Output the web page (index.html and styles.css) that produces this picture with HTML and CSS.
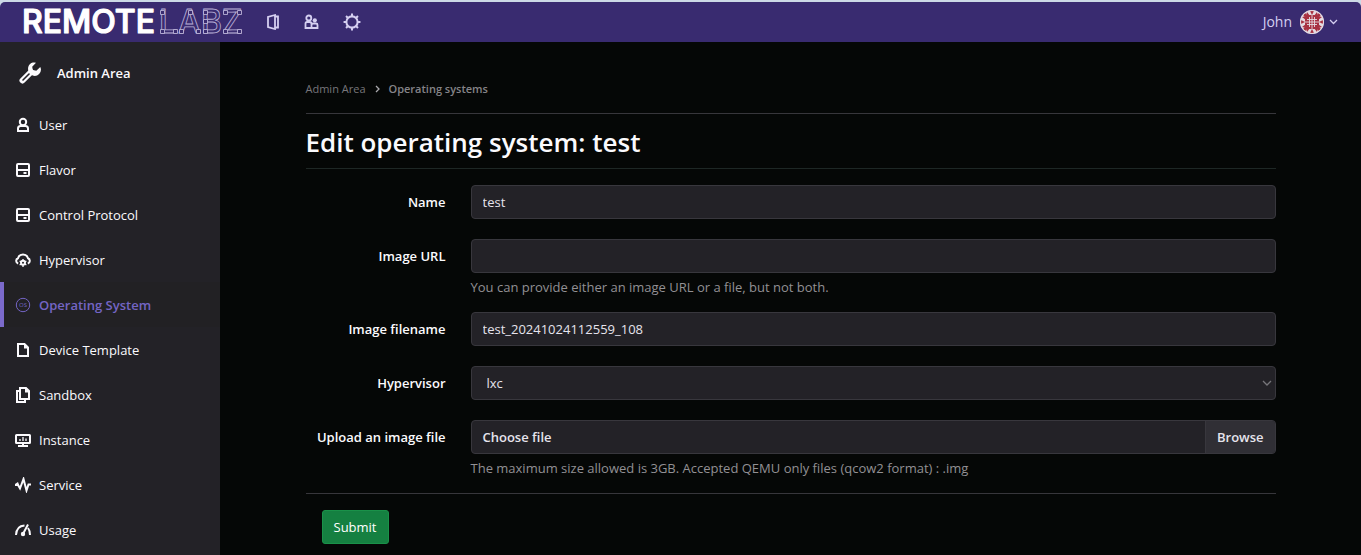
FILE: index.html
```html
<!DOCTYPE html>
<html lang="en">
<head>
<meta charset="utf-8">
<title>Edit operating system - RemoteLabz</title>
<link rel="stylesheet" href="styles.css">
</head>
<body>
<header class="navbar">
  <a class="brand" href="#" aria-label="RemoteLabz">
    <svg width="224" height="40" viewBox="0 0 224 40">
      <text class="brand-solid" x="0" y="31">REMOTE</text>
      <text class="brand-outline" x="137 156 179 200" y="31">LABZ</text>
      <g class="brand-nodes">
        <path d="M138.500 8.500h4v4h-4zM138.500 27.500h4v4h-4zM151.500 27.500h4v4h-4zM157.500 27.500h4v4h-4zM166.500 8.500h4v4h-4zM174.500 27.500h4v4h-4zM181.500 8.500h4v4h-4zM181.500 17.500h4v4h-4zM181.500 27.500h4v4h-4zM201.500 8.500h4v4h-4zM215.500 8.500h4v4h-4zM201.500 27.500h4v4h-4zM215.500 27.500h4v4h-4z"/>
      </g>
    </svg>
  </a>
  <nav class="nav-links" aria-label="Main">
    <a href="#" aria-label="Labs"><svg width="16" height="16" viewBox="0 0 16 16"><path class="line" d="M10 1 3 3v10l7 2zM10 2.500h3v11h-3"/></svg></a>
    <a href="#" aria-label="Groups"><svg width="16" height="16" viewBox="0 0 16 16"><path class="line" d="M1.500 14V9.500Q1.500 8 3 8h2.500Q7.500 8 7.500 10v4zM7.500 14V11q0-1.500 1.500-1.500h3q1.500 0 1.500 1.500v3z"/><circle class="line" cx="4.800" cy="4" r="2.500"/><circle class="shape" cx="10.800" cy="6.300" r="2.100"/></svg></a>
    <a href="#" aria-label="Administration"><svg width="18" height="18" viewBox="0 0 16 16"><circle class="line" cx="8" cy="8" r="5"/><path class="line" d="M8 .5v2.500M8 13v2.500M.5 8h2.500M13 8h2.500M2.700 2.700l1.700 1.700M11.600 11.600l1.700 1.700M13.300 2.700l-1.700 1.700M4.400 11.600l-1.700 1.700"/></svg></a>
  </nav>
  <button class="account" type="button">
    <span>John</span>
    <svg width="24" height="24" viewBox="0 0 24 24">
      <circle cx="12" cy="12" r="12" fill="#e4dbe2"/>
      <g fill="#a83242">
        <path d="M7 2l3 4H6zM17 2l-3 4h4zM2 7l4 3V6zM2 17l4-3v4zM22 7l-4 3V6zM22 17l-4-3v4zM7 22l3-4H6zM17 22l-3-4h4z"/>
        <path d="M10 1h4l-2 4zM10 23h4l-2-4zM1 10v4l4-2zM23 10v4l-4-2z"/>
        <path d="M3 5l3-2 1 3-2 1zM21 5l-3-2-1 3 2 1zM3 19l3 2 1-3-2-1zM21 19l-3 2-1-3 2-1z"/>
        <rect x="5" y="5" width="14" height="14" rx="4"/>
      </g>
      <path d="M9.500 7v10M12 5v14M14.500 7v10M7 9.500h10M5 12h14M7 14.500h10" stroke="#e4dbe2" stroke-width=".9"/>
      <circle cx="12" cy="12" r="11.500" fill="none" stroke="#e4dbe2"/>
    </svg>
    <svg width="9" height="6" viewBox="0 0 9 6"><path d="M1 1l3.500 3.500L8 1" fill="none" stroke="currentColor" stroke-width="1.300"/></svg>
  </button>
</header>
<div class="layout">
  <aside class="sidebar">
    <a class="sidebar-title" href="#">
      <svg width="22" height="22" viewBox="0 0 22 22"><path d="M3.500 18.500 12 10" fill="none" stroke="currentColor" stroke-width="6" stroke-linecap="round"/><path class="shape" d="M17 .7A6.200 6.200 0 0 0 9.200 8l1 4.300 3 1A6.200 6.200 0 0 0 21.300 5l-4 3.700-3.500-.7-.6-3.300z"/><path d="M4 18l6-6" fill="none" stroke="#232227" stroke-width="1.600" stroke-linecap="round"/></svg>
      <span>Admin Area</span>
    </a>
    <ul class="menu">
      <li><a href="#"><svg width="16" height="16" viewBox="0 0 16 16"><path class="line" d="M3 14v-2.500Q3 9 5.500 9h5Q13 9 13 11.500V14z"/><circle class="line" cx="8" cy="5" r="3.200"/></svg>User</a></li>
      <li><a href="#"><svg width="16" height="16" viewBox="0 0 16 16"><rect class="line" x="2" y="2" width="12" height="12" rx="1"/><path class="line" d="M2 8h12M8.500 11h3"/></svg>Flavor</a></li>
      <li><a href="#"><svg width="16" height="16" viewBox="0 0 16 16"><rect class="line" x="2" y="2" width="12" height="12" rx="1"/><path class="line" d="M2 8h12M8.500 11h3"/></svg>Control Protocol</a></li>
      <li><a href="#"><svg width="16" height="16" viewBox="0 0 16 16"><path class="line" d="M3.200 11.500A2.800 2.800 0 0 1 3 6.200 5.200 5.200 0 0 1 13 6.200a2.800 2.800 0 0 1-.2 5.300"/><circle class="line" cx="8" cy="10.800" r="2"/><path class="line thin" d="M8 7v2M8 13v2M4.600 9l1.700 1M11.400 9l-1.700 1M4.600 13l1.700-1M11.400 13l-1.700-1"/></svg>Hypervisor</a></li>
      <li class="active"><a href="#" aria-current="page"><svg width="16" height="16" viewBox="0 0 16 16"><circle class="line hair" cx="8" cy="8" r="6.700"/><text class="os-mark" x="8" y="10" text-anchor="middle">OS</text></svg>Operating System</a></li>
      <li><a href="#"><svg width="16" height="16" viewBox="0 0 16 16"><path class="line" d="M3 2h6.500L13 5.500V14H3z"/><path class="shape" d="M9 2h1l3.500 3.500v1H9z"/></svg>Device Template</a></li>
      <li><a href="#"><svg width="16" height="16" viewBox="0 0 16 16"><path class="line" d="M5 1h6l3 3v8H5zM5 4H2v11h8v-3"/><path class="shape" d="M10 1h1l3.500 3.500v1H10z"/></svg>Sandbox</a></li>
      <li><a href="#"><svg width="16" height="16" viewBox="0 0 16 16"><rect class="line" x="1" y="3" width="14" height="8" rx=".5"/><path class="line" d="M8 11v3M3 14h10"/><path class="line thin" d="M5 9V7M8 9V5M11 9V6.500"/></svg>Instance</a></li>
      <li><a href="#"><svg width="16" height="16" viewBox="0 0 16 16"><path class="line" d="M0 8h3l2 3.500L8.500 2l3 11.500L13.500 7.500H16"/><path class="shape" d="M0 7l3-2 1.500 4z"/></svg>Service</a></li>
      <li><a href="#"><svg width="16" height="16" viewBox="0 0 16 16"><path class="line" d="M1 13Q1.500 4 9.500 3.500M13 6q2 2.500 2 7M8.500 11 13 2.500"/><circle class="shape" cx="8" cy="12" r="2.200"/></svg>Usage</a></li>
    </ul>
  </aside>
  <main class="content">
    <nav class="breadcrumb" aria-label="Breadcrumb">
      <a href="#">Admin Area</a>
      <svg width="5" height="8" viewBox="0 0 5 8"><path d="M1 1l3 3-3 3" fill="none" stroke="currentColor" stroke-width="1.300"/></svg>
      <a class="current" href="#">Operating systems</a>
    </nav>
    <h1 class="page-title">Edit operating system: test</h1>
    <form class="form">
      <div class="form-row">
        <label for="name">Name</label>
        <div><input class="control" id="name" type="text" value="test"></div>
      </div>
      <div class="form-row helped">
        <label for="url">Image URL</label>
        <div><input class="control" id="url" type="text">
        <p class="help">You can provide either an image URL or a file, but not both.</p></div>
      </div>
      <div class="form-row">
        <label for="filename">Image filename</label>
        <div><input class="control" id="filename" type="text" value="test_20241024112559_108"></div>
      </div>
      <div class="form-row">
        <label for="hypervisor">Hypervisor</label>
        <div class="select-wrap"><select class="control" id="hypervisor"><option>lxc</option></select>
        <svg class="select-arrow" width="10" height="6" viewBox="0 0 10 6"><path d="M1 1l4 4 4-4" fill="none" stroke="currentColor" stroke-width="1.300"/></svg></div>
      </div>
      <div class="form-row helped">
        <label for="upload">Upload an image file</label>
        <div>
          <div class="file"><input class="file-input" id="upload" type="file"><span class="file-name">Choose file</span><span class="file-button">Browse</span></div>
          <p class="help">The maximum size allowed is 3GB. Accepted QEMU only files (qcow2 format) : .img</p>
        </div>
      </div>
      <div class="form-actions"><button class="submit" type="submit">Submit</button></div>
    </form>
  </main>
</div>
</body>
</html>
```
FILE: styles.css
```css
* { box-sizing: border-box; }
body {
  margin: 0;
  min-height: 100vh;
  display: flex;
  flex-direction: column;
  padding-top: 2px;
  background: #ccd9e6;
  color: #fbfafd;
  font: 13px/20px "Open Sans", "Noto Sans", sans-serif;
  overflow: hidden;
}
a { color: inherit; text-decoration: none; }
svg { display: block; flex: none; }
.line { fill: none; stroke: currentColor; stroke-width: 2; }
.thin { stroke-width: 1.3; }
.hair { stroke-width: 1; }
.shape { fill: currentColor; }

.navbar {
  display: flex;
  align-items: center;
  height: 40px;
  padding: 0 23px 0 22px;
  background: #392b70;
  border-radius: 5px 5px 0 0;
  color: #d5cff1;
}
.brand { color: #fff; }
.brand-solid, .brand-outline { font: 500 32px Inter, sans-serif; }
.brand-solid { fill: #fff; stroke: #fff; stroke-width: 1.2; stroke-linejoin: round; }
.brand-outline { fill: none; stroke: #b9b1d8; stroke-width: 0.8; }
.brand-nodes { fill: #392b70; stroke: #c9c2e2; stroke-width: 0.8; }
.nav-links { display: flex; align-items: center; gap: 23px; padding-left: 19px; }
.nav-links .line { stroke-width: 1.8; }
.account {
  display: flex;
  align-items: center;
  gap: 5px;
  margin-left: auto;
  padding: 0;
  border: 0;
  background: none;
  color: inherit;
  font: inherit;
  font-size: 14px;
}
.account span { padding-right: 3px; }

.layout { display: flex; flex: 1; background: #050706; }
.sidebar { width: 220px; flex: none; background: #232227; }
.sidebar-title {
  display: flex;
  align-items: center;
  gap: 16px;
  height: 60px;
  padding: 2px 19px 0;
  font-weight: 600;
}
.menu { margin: 0; padding: 0; list-style: none; }
.menu a {
  display: flex;
  align-items: center;
  gap: 8px;
  height: 45px;
  padding: 0 15px 0 11px;
  border-left: 4px solid transparent;
}
.menu .active a {
  border-color: #7b6acb;
  background: #222124;
  color: #7465c4;
  font-weight: 600;
}
.os-mark { font: 6px "Open Sans", sans-serif; fill: currentColor; }

.content { flex: 1; max-width: 970px; margin: 0 auto; padding-top: 37px; }
.breadcrumb {
  display: flex;
  align-items: center;
  gap: 9px;
  padding-bottom: 14px;
  border-bottom: 1px solid #37363b;
  color: #77767b;
  font-size: 11px;
}
.breadcrumb svg { color: #aaa9ad; }
.breadcrumb .current { font-weight: 600; color: #858488; }
.page-title {
  margin: 0 0 16px;
  padding: 12px 0 10px;
  border-bottom: 1px solid #1e2725;
  font-size: 26px;
  line-height: 32px;
  font-weight: 600;
}
.form-row {
  display: grid;
  grid-template-columns: 140px 1fr;
  column-gap: 25px;
  margin-bottom: 20px;
}
.form-row.helped { margin-bottom: 15px; }
.form-row label { padding-top: 7px; text-align: right; font-weight: 600; }
.control, .file {
  display: block;
  width: 100%;
  height: 34px;
  border: 1px solid #38373d;
  border-radius: 4px;
  background: #232227;
  color: #e6e4ed;
  font: inherit;
}
.control { padding: 0 11px; appearance: none; }
select.control { padding-left: 15px; }
.select-wrap { position: relative; }
.select-arrow { position: absolute; right: 4px; top: 14px; color: #77767b; pointer-events: none; }
.file { display: flex; position: relative; font-weight: 600; overflow: hidden; }
.file-input { position: absolute; inset: 0; width: 100%; opacity: 0; }
.file-name { flex: 1; padding: 6px 11px; }
.file-button { padding: 6px 11px; border-left: 1px solid #38373d; background: #302f35; }
.help { margin: 4px 0 0; color: #929094; }
.form-actions { padding: 16px; border-top: 1px solid #37363b; }
.submit {
  height: 34px;
  padding: 0 11px;
  border: 1px solid #1a9149;
  border-radius: 3px;
  background: #158041;
  color: #fff;
  font: inherit;
}
```
